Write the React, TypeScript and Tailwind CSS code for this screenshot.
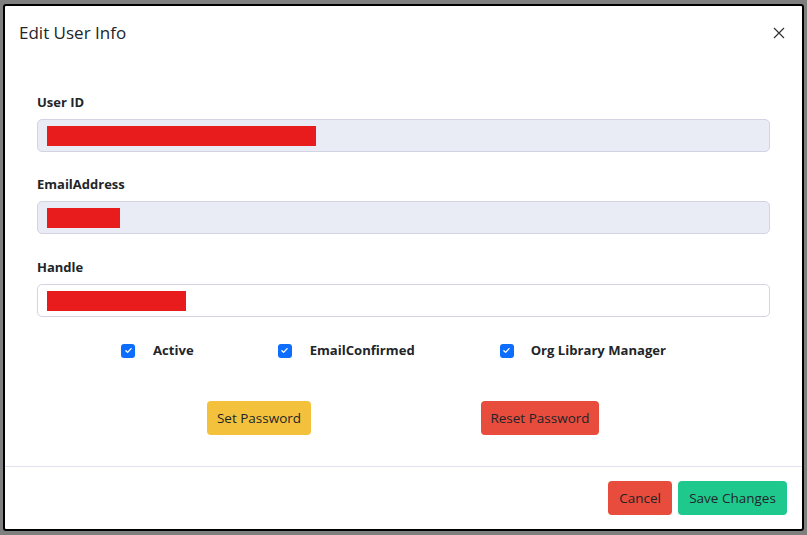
import React from "react";

function CheckBox() {
  return (
    <span className="flex items-center justify-center w-[14px] h-[14px] rounded-[3px] bg-[#0d6efd]">
      <svg viewBox="0 0 12 12" className="w-[9px] h-[9px]">
        <path d="M2.5 6.2l2.3 2.3 4.7-5" fill="none" stroke="#fff" strokeWidth="1.8" strokeLinecap="round" strokeLinejoin="round" />
      </svg>
    </span>
  );
}

function Field({ label, redact, disabled }: { label: string; redact: number; disabled?: boolean }) {
  return (
    <div className="flex flex-col">
      <label className="text-[13px] leading-[18px] font-bold text-[#212529]">{label}</label>
      <div
        className={
          "mt-[8px] h-[33px] rounded-[5px] border border-[#d3d3e3] flex items-center pl-[9px] " +
          (disabled ? "bg-[#e9ecf4]" : "bg-white")
        }
      >
        <div className="h-[20px] bg-[#e81c1c]" style={{ width: redact }} />
      </div>
    </div>
  );
}

export default function App() {
  return (
    <div
      className="w-[807px] h-[535px] bg-[#7f7f7f] pt-[4px] pl-[3px] overflow-hidden"
      style={{ fontFamily: '"Open Sans", "Noto Sans", sans-serif' }}
    >
      <div className="w-[801px] h-[527px] border-2 border-black bg-white rounded-[3px] flex flex-col">
        {/* Header */}
        <div className="h-[54px] flex items-center justify-between pl-[14px] pr-[16px]">
          <h1 className="text-[17px] text-[#212529]">Edit User Info</h1>
          <button className="w-[14px] h-[14px] flex items-center justify-center">
            <svg viewBox="0 0 12 12" className="w-[12px] h-[12px]">
              <path d="M1 1l10 10M11 1L1 11" stroke="#333" strokeWidth="1.2" />
            </svg>
          </button>
        </div>

        {/* Body */}
        <div className="flex-1 px-[32px] pt-[33px] flex flex-col">
          <Field label="User ID" redact={269} disabled />
          <div className="mt-[23px]">
            <Field label="EmailAddress" redact={73} disabled />
          </div>
          <div className="mt-[24px]">
            <Field label="Handle" redact={139} />
          </div>

          <div className="mt-[24px] h-[20px] flex items-center pl-[84px] text-[13.1px] font-bold text-[#212529]">
            <div className="flex items-center gap-[18px]">
              <CheckBox />
              <span>Active</span>
            </div>
            <div className="flex items-center gap-[18px] ml-[84px]">
              <CheckBox />
              <span>EmailConfirmed</span>
            </div>
            <div className="flex items-center gap-[17px] ml-[85px]">
              <CheckBox />
              <span>Org Library Manager</span>
            </div>
          </div>

          <div className="mt-[40px] flex pl-[170px] text-[13.5px] text-[#212529]">
            <button className="h-[34px] w-[104px] rounded-[4px] bg-[#f4c13d]">Set Password</button>
            <button className="h-[34px] w-[118px] ml-[170px] rounded-[4px] bg-[#e74c3c]">Reset Password</button>
          </div>
        </div>

        {/* Footer */}
        <div className="h-[63px] border-t border-[#e3e1f0] flex items-center justify-end gap-[6px] pr-[15px] text-[13.5px] text-[#212529]">
          <button className="h-[34px] w-[64px] rounded-[4px] bg-[#e74c3c]">Cancel</button>
          <button className="h-[34px] w-[109px] rounded-[4px] bg-[#1fc98d]">Save Changes</button>
        </div>
      </div>
    </div>
  );
}
